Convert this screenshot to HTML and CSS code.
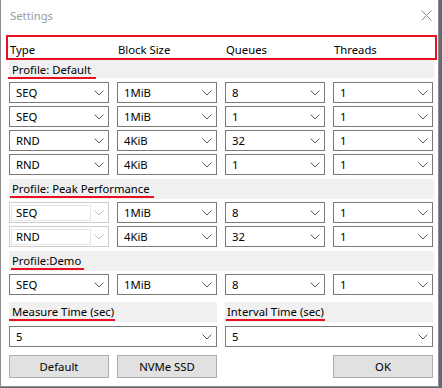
FILE: index.html
```html
<!DOCTYPE html>
<html>
<head>
<meta charset="utf-8">
<title>Settings</title>
<link rel="stylesheet" href="styles.css">
</head>
<body>
<div class="window">
  <div class="titlebar">
    <span class="title">Settings</span>
    <svg class="close" width="11" height="11" viewBox="0 0 11 11"><path d="M0.5 0.5 L10.5 10.5 M10.5 0.5 L0.5 10.5"/></svg>
  </div>
  <div class="content">
    <div class="header grid4">
      <span>Type</span><span>Block Size</span><span>Queues</span><span>Threads</span>
    </div>
    <div class="band band-first"><span class="label l-default">Profile: Default</span></div>
    <div class="rows">
      <div class="grid4">
        <div class="combo"><span>SEQ</span><svg class="chev" viewBox="0 0 10 6"><path d="M0.5 0.5 L5 5 L9.5 0.5"/></svg></div>
        <div class="combo"><span>1MiB</span><svg class="chev" viewBox="0 0 10 6"><path d="M0.5 0.5 L5 5 L9.5 0.5"/></svg></div>
        <div class="combo"><span>8</span><svg class="chev" viewBox="0 0 10 6"><path d="M0.5 0.5 L5 5 L9.5 0.5"/></svg></div>
        <div class="combo"><span>1</span><svg class="chev" viewBox="0 0 10 6"><path d="M0.5 0.5 L5 5 L9.5 0.5"/></svg></div>
      </div>
      <div class="grid4">
        <div class="combo"><span>SEQ</span><svg class="chev" viewBox="0 0 10 6"><path d="M0.5 0.5 L5 5 L9.5 0.5"/></svg></div>
        <div class="combo"><span>1MiB</span><svg class="chev" viewBox="0 0 10 6"><path d="M0.5 0.5 L5 5 L9.5 0.5"/></svg></div>
        <div class="combo"><span>1</span><svg class="chev" viewBox="0 0 10 6"><path d="M0.5 0.5 L5 5 L9.5 0.5"/></svg></div>
        <div class="combo"><span>1</span><svg class="chev" viewBox="0 0 10 6"><path d="M0.5 0.5 L5 5 L9.5 0.5"/></svg></div>
      </div>
      <div class="grid4">
        <div class="combo"><span>RND</span><svg class="chev" viewBox="0 0 10 6"><path d="M0.5 0.5 L5 5 L9.5 0.5"/></svg></div>
        <div class="combo"><span>4KiB</span><svg class="chev" viewBox="0 0 10 6"><path d="M0.5 0.5 L5 5 L9.5 0.5"/></svg></div>
        <div class="combo"><span>32</span><svg class="chev" viewBox="0 0 10 6"><path d="M0.5 0.5 L5 5 L9.5 0.5"/></svg></div>
        <div class="combo"><span>1</span><svg class="chev" viewBox="0 0 10 6"><path d="M0.5 0.5 L5 5 L9.5 0.5"/></svg></div>
      </div>
      <div class="grid4">
        <div class="combo"><span>RND</span><svg class="chev" viewBox="0 0 10 6"><path d="M0.5 0.5 L5 5 L9.5 0.5"/></svg></div>
        <div class="combo"><span>4KiB</span><svg class="chev" viewBox="0 0 10 6"><path d="M0.5 0.5 L5 5 L9.5 0.5"/></svg></div>
        <div class="combo"><span>1</span><svg class="chev" viewBox="0 0 10 6"><path d="M0.5 0.5 L5 5 L9.5 0.5"/></svg></div>
        <div class="combo"><span>1</span><svg class="chev" viewBox="0 0 10 6"><path d="M0.5 0.5 L5 5 L9.5 0.5"/></svg></div>
      </div>
    </div>
    <div class="band"><span class="label l-peak">Profile: Peak Performance</span></div>
    <div class="rows">
      <div class="grid4">
        <div class="combo disabled"><span class="inner">SEQ</span><svg class="chev" viewBox="0 0 10 6"><path d="M0.5 0.5 L5 5 L9.5 0.5"/></svg></div>
        <div class="combo"><span>1MiB</span><svg class="chev" viewBox="0 0 10 6"><path d="M0.5 0.5 L5 5 L9.5 0.5"/></svg></div>
        <div class="combo"><span>8</span><svg class="chev" viewBox="0 0 10 6"><path d="M0.5 0.5 L5 5 L9.5 0.5"/></svg></div>
        <div class="combo"><span>1</span><svg class="chev" viewBox="0 0 10 6"><path d="M0.5 0.5 L5 5 L9.5 0.5"/></svg></div>
      </div>
      <div class="grid4">
        <div class="combo disabled"><span class="inner">RND</span><svg class="chev" viewBox="0 0 10 6"><path d="M0.5 0.5 L5 5 L9.5 0.5"/></svg></div>
        <div class="combo"><span>4KiB</span><svg class="chev" viewBox="0 0 10 6"><path d="M0.5 0.5 L5 5 L9.5 0.5"/></svg></div>
        <div class="combo"><span>32</span><svg class="chev" viewBox="0 0 10 6"><path d="M0.5 0.5 L5 5 L9.5 0.5"/></svg></div>
        <div class="combo"><span>1</span><svg class="chev" viewBox="0 0 10 6"><path d="M0.5 0.5 L5 5 L9.5 0.5"/></svg></div>
      </div>
    </div>
    <div class="band"><span class="label l-demo">Profile:Demo</span></div>
    <div class="rows">
      <div class="grid4">
        <div class="combo"><span>SEQ</span><svg class="chev" viewBox="0 0 10 6"><path d="M0.5 0.5 L5 5 L9.5 0.5"/></svg></div>
        <div class="combo"><span>1MiB</span><svg class="chev" viewBox="0 0 10 6"><path d="M0.5 0.5 L5 5 L9.5 0.5"/></svg></div>
        <div class="combo"><span>8</span><svg class="chev" viewBox="0 0 10 6"><path d="M0.5 0.5 L5 5 L9.5 0.5"/></svg></div>
        <div class="combo"><span>1</span><svg class="chev" viewBox="0 0 10 6"><path d="M0.5 0.5 L5 5 L9.5 0.5"/></svg></div>
      </div>
    </div>
    <div class="grid2 times">
      <div class="field">
        <div class="band"><span class="label l-measure">Measure Time (sec)</span></div>
        <div class="combo"><span>5</span><svg class="chev" viewBox="0 0 10 6"><path d="M0.5 0.5 L5 5 L9.5 0.5"/></svg></div>
      </div>
      <div class="field">
        <div class="band"><span class="label l-interval">Interval Time (sec)</span></div>
        <div class="combo"><span>5</span><svg class="chev" viewBox="0 0 10 6"><path d="M0.5 0.5 L5 5 L9.5 0.5"/></svg></div>
      </div>
    </div>
    <div class="grid4 buttons">
      <button class="btn">Default</button>
      <button class="btn">NVMe SSD</button>
      <button class="btn ok">OK</button>
    </div>
  </div>
</div>
</body>
</html>
```

FILE: styles.css
```css
html, body {
  margin: 0;
  padding: 0;
}
body {
  background: #5f6b78;
  font-family: "Noto Sans", "Open Sans", sans-serif;
  font-size: 11.3px;
  color: #000;
  width: 442px;
  height: 388px;
  overflow: hidden;
}
.window {
  width: 437px;
  height: 386px;
  background: #fff;
  border: 1px solid #8e8e8e;
  border-top: none;
}
.titlebar {
  height: 31px;
  display: flex;
  align-items: center;
  padding-left: 9px;
}
.title {
  color: #9b9b9b;
  font-size: 11.3px;
}
.close {
  margin-left: auto;
  margin-right: 6px;
  fill: none;
  stroke: #8a8a8a;
  stroke-width: 1;
}
.content {
  padding: 0 4px 0 8px;
}
.grid4 {
  display: grid;
  grid-template-columns: repeat(4, 100px);
  column-gap: 8px;
}
.grid2 {
  display: grid;
  grid-template-columns: repeat(2, 208px);
  column-gap: 8px;
}
.header {
  margin: 4px -3px 0 -3px;
  height: 21px;
  border: 2px solid #e81123;
  padding: 0 1px;
  line-height: 17px;
  padding-top: 0;
  align-items: center;
}
.header span {
  padding-left: 1px;
  padding-top: 3px;
}
.band {
  background: #f0f0f0;
  height: 20px;
  margin-top: 4px;
  margin-bottom: 3px;
  box-sizing: border-box;
  padding-top: 2px;
}
.band-first {
  height: 18px;
  margin-top: 0;
  margin-bottom: 4px;
  padding-top: 2px;
}
.label {
  display: inline-block;
  line-height: 14px;
  border-bottom: 2px solid #e81123;
}
.l-default { margin-left: -1px; padding: 0 5px 0 4px; }
.l-peak { margin-left: 1px; padding: 0 4px 0 2px; }
.l-demo { margin-left: 2px; padding: 0 3px 0 1px; }
.l-measure { margin-left: 0; padding: 0 1px 0 3px; }
.l-interval { margin-left: 1px; padding: 0 1px 0 1px; }
.rows {
  display: flex;
  flex-direction: column;
  gap: 3px;
}
.combo {
  height: 21px;
  box-sizing: border-box;
  border: 1px solid #7a7a7a;
  background: #fff;
  display: flex;
  align-items: center;
  justify-content: space-between;
  padding: 0 4px 0 6px;
}
.chev {
  width: 10px;
  height: 6px;
  fill: none;
  stroke: #5a5a5a;
  stroke-width: 1;
}
.combo.disabled {
  border-color: #cccccc;
  padding: 0 4px 0 1px;
}
.combo.disabled .inner {
  box-sizing: border-box;
  width: 80px;
  height: 16px;
  border: 1px solid #e6e6e6;
  padding-left: 4px;
  line-height: 14px;
}
.combo.disabled .chev {
  stroke: #c2c2c2;
}
.times {
  margin-top: 4px;
}
.times .band {
  margin-top: 3px;
  margin-bottom: 4px;
}
.buttons {
  margin-top: 8px;
}
.btn {
  height: 23px;
  box-sizing: border-box;
  background: #e1e1e1;
  border: 1px solid #adadad;
  font-family: inherit;
  font-size: inherit;
  color: #000;
  padding: 0;
  margin: 0;
}
.btn.ok {
  grid-column: 4;
}
```
